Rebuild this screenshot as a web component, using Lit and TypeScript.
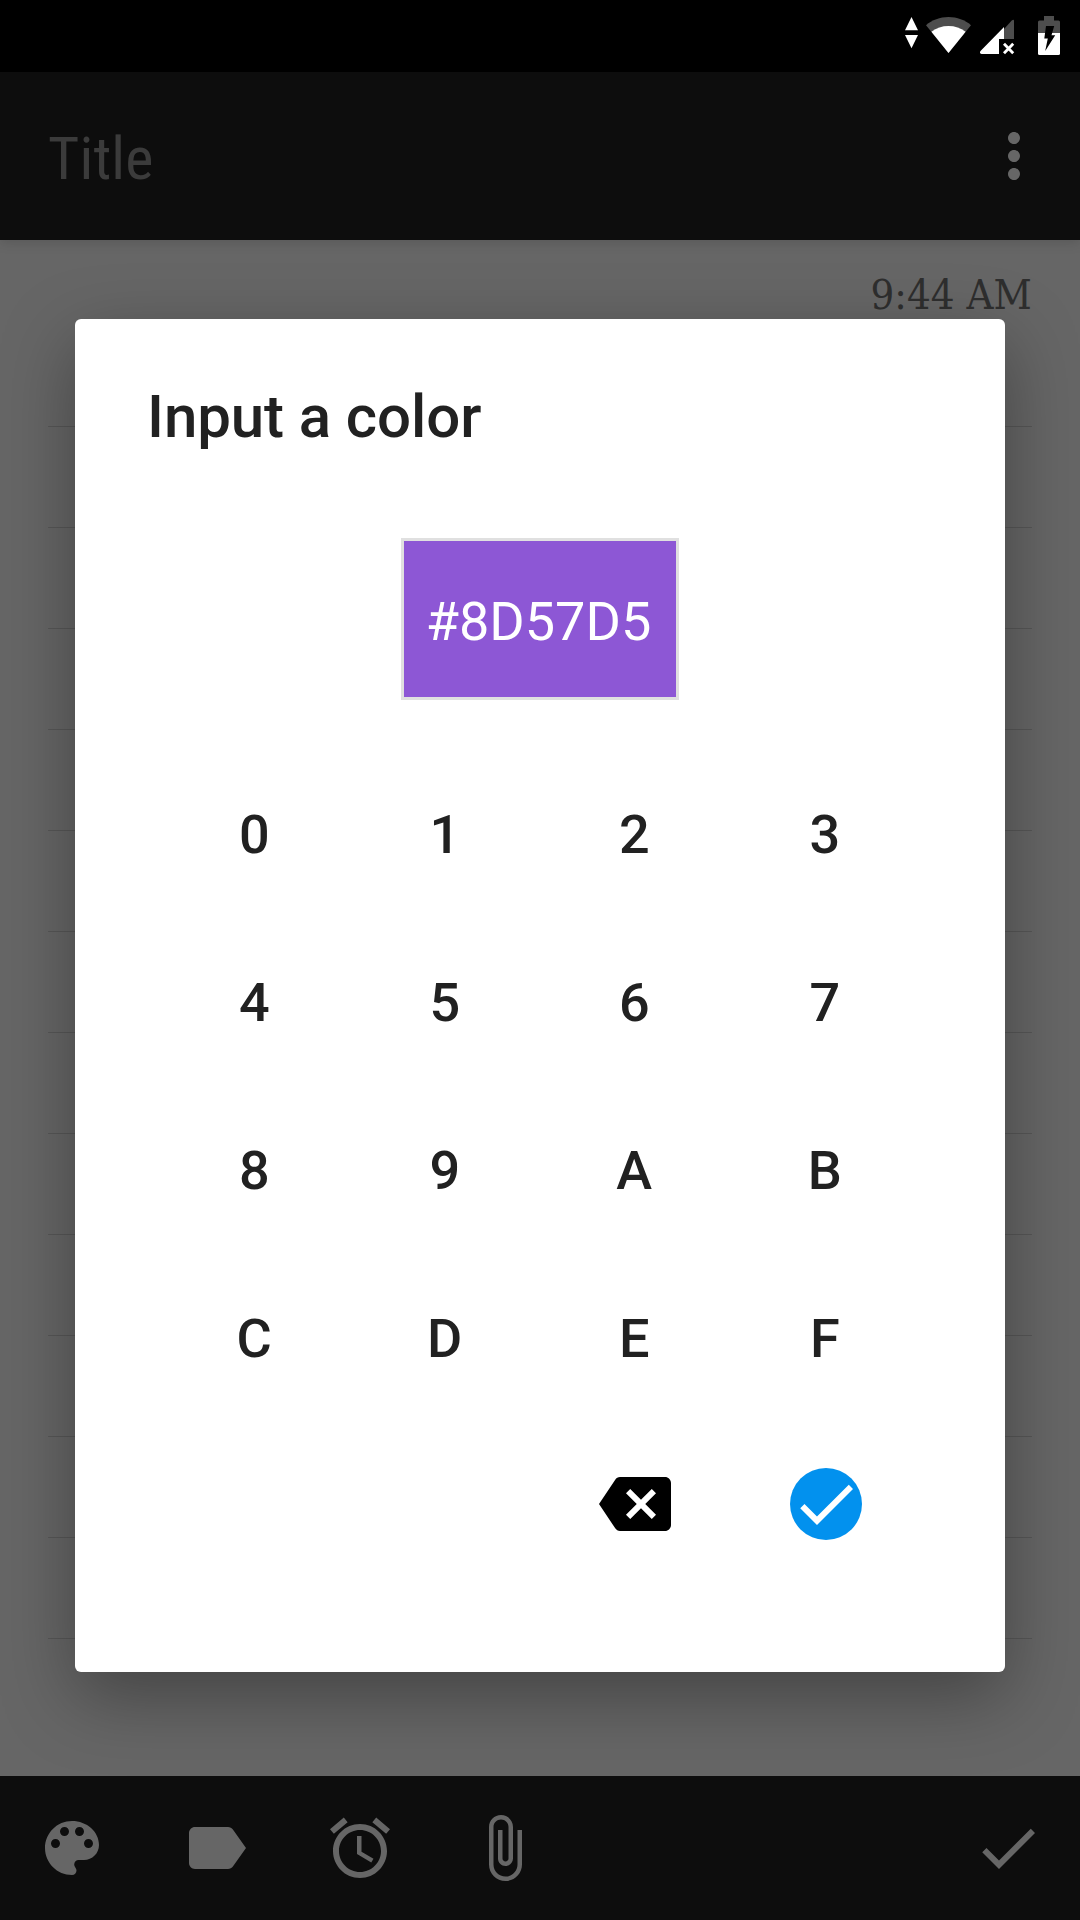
import { LitElement, html, css, svg } from "lit";
import { customElement, property, state } from "lit/decorators.js";

const ICONS: Record<string, string> = {
  more: "M12 8c1.1 0 2-.9 2-2s-.9-2-2-2-2 .9-2 2 .9 2 2 2zm0 2c-1.1 0-2 .9-2 2s.9 2 2 2 2-.9 2-2-.9-2-2-2zm0 6c-1.1 0-2 .9-2 2s.9 2 2 2 2-.9 2-2-.9-2-2-2z",
  palette:
    "M12 3c-4.97 0-9 4.03-9 9s4.03 9 9 9c.83 0 1.5-.67 1.5-1.5 0-.39-.15-.74-.39-1.01-.23-.26-.38-.61-.38-.99 0-.83.67-1.5 1.5-1.5H16c2.76 0 5-2.24 5-5 0-4.42-4.03-8-9-8zm-5.5 9c-.83 0-1.5-.67-1.5-1.5S5.67 9 6.5 9 8 9.67 8 10.5 7.33 12 6.5 12zm3-4C8.67 8 8 7.33 8 6.5S8.67 5 9.5 5s1.5.67 1.5 1.5S10.33 8 9.5 8zm5 0c-.83 0-1.5-.67-1.5-1.5S13.67 5 14.5 5s1.5.67 1.5 1.5S15.33 8 14.5 8zm3 4c-.83 0-1.5-.67-1.5-1.5S16.67 9 17.5 9s1.5.67 1.5 1.5-.67 1.5-1.5 1.5z",
  label:
    "M17.63 5.84C17.27 5.33 16.67 5 16 5L5 5.01C3.9 5.01 3 5.9 3 7v10c0 1.1.9 1.99 2 1.99L16 19c.67 0 1.27-.33 1.63-.84L22 12l-4.37-6.16z",
  alarm:
    "M22 5.72l-4.6-3.86-1.29 1.53 4.6 3.86L22 5.72zM7.88 3.39L6.6 1.86 2 5.71l1.29 1.53 4.59-3.85zM12.5 8H11v6l4.75 2.85.75-1.23-4-2.37V8zM12 4c-4.97 0-9 4.03-9 9s4.02 9 9 9c4.97 0 9-4.03 9-9s-4.03-9-9-9zm0 16c-3.87 0-7-3.13-7-7s3.13-7 7-7 7 3.13 7 7-3.13 7-7 7z",
  attach:
    "M16.5 6v11.5c0 2.21-1.79 4-4 4s-4-1.79-4-4V5c0-1.38 1.12-2.5 2.5-2.5s2.5 1.12 2.5 2.5v10.5c0 .55-.45 1-1 1s-1-.45-1-1V6H10v9.5c0 1.38 1.12 2.5 2.5 2.5s2.5-1.12 2.5-2.5V5c0-2.21-1.79-4-4-4S7 2.79 7 5v12.5c0 3.04 2.46 5.5 5.5 5.5s5.5-2.46 5.5-5.5V6h-1.5z",
  check: "M9 16.17L4.83 12l-1.42 1.41L9 19 21 7l-1.41-1.41z",
  backspace:
    "M22 3H7c-.69 0-1.23.35-1.59.88L0 12l5.41 8.11c.36.53.9.89 1.59.89h15c1.1 0 2-.9 2-2V5c0-1.1-.9-2-2-2zm-3 12.59L17.59 17 14 13.41 10.41 17 9 15.59 12.59 12 9 8.41 10.41 7 14 10.59 17.59 7 19 8.41 15.41 12 19 15.59z",
};

@customElement("md-icon")
class MdIcon extends LitElement {
  @property() name = "";

  static styles = css`
    :host { display: block; width: 72px; height: 72px; flex: none; }
    .glyph { display: block; width: 72px; height: 72px; fill: currentColor; }
  `;

  render() {
    return html`<svg class="glyph" viewBox="0 0 24 24">
      ${svg`<path d=${ICONS[this.name] ?? ""}></path>`}
    </svg>`;
  }
}

@customElement("status-bar")
class StatusBar extends LitElement {
  static styles = css`
    :host { display: flex; justify-content: flex-end; height: 72px; background: #000; }
    .icons { display: block; width: 200px; height: 72px; }
    .dim { fill: #4d4d4d; }
    .lit { fill: #fff; }
    .cut { fill: #000; }
    .cross { stroke: #fff; stroke-width: 2.8; fill: none; }
  `;

  render() {
    return html`<svg class="icons" viewBox="0 0 200 72">
      <path class="lit" d="M31.500 17L38 30.300H25zM25 35h13l-6.500 13.300z" />
      <path class="dim" d="M68.500 53L46 25.200C52 20 60 17 68.500 17S85 20 91 25.200z" />
      <path class="lit" d="M68.500 53L51.400 31.800C56.500 28 62 26 68.500 26s12 2 17.100 5.800z" />
      <path class="dim" d="M134 21v18h-14V33.500L131.500 20.800Q134 18.500 134 21z" />
      <path class="lit" d="M124 27v12h-5v15h-17.500q-2.500-.7-1-3z" />
      <path class="cross" d="M124 43.700l9.200 9.600M133.200 43.700L124 53.300" />
      <path class="dim" d="M164 16h10v4.500h4.500q1.500 0 1.500 1.500v11h-22V22q0-1.500 1.500-1.500h4.500z" />
      <path class="lit" d="M158 33h22v20.500q0 1.500-1.500 1.500h-19q-1.500 0-1.500-1.500z" />
      <path class="cut" d="M166 26h8.200l-2.700 9.200h3.700L165.200 51l2.600-12.500h-3.500z" />
    </svg>`;
  }
}

@customElement("color-dialog")
class ColorDialog extends LitElement {
  @state() private color = "8D57D5";

  private keys = [..."0123456789ABCDEF"];

  static styles = css`
    :host {
      display: flex;
      flex-direction: column;
      box-sizing: border-box;
      width: 930px;
      height: 1353px;
      padding: 62px 74px 0;
      border-radius: 6px;
      background: #fff;
      box-shadow: 0 24px 72px rgba(0, 0, 0, 0.34);
      font-family: Roboto, sans-serif;
      color: #212121;
    }
    .heading {
      margin: 0 0 85px -2px;
      font-size: 60px;
      line-height: 72px;
      font-weight: 500;
      letter-spacing: -0.1px;
    }
    .swatch {
      align-self: center;
      display: flex;
      align-items: center;
      justify-content: center;
      box-sizing: border-box;
      width: 278px;
      height: 162px;
      padding: 5px 3px 0 0;
      border: 3px solid #e0e0e0;
      color: #fff;
      font-size: 54px;
      white-space: nowrap;
    }
    .pad {
      display: grid;
      grid-template-columns: repeat(4, 190.5px);
      grid-auto-rows: 168px;
      justify-content: center;
      margin-top: 48px;
    }
    .key {
      display: flex;
      align-items: center;
      justify-content: center;
      padding: 5px 0 0;
      border: 0;
      background: none;
      color: inherit;
      font: 500 54px/63px Roboto, sans-serif;
    }
    .key:nth-child(4n + 3),
    .key:nth-child(4n) { padding-right: 2px; }
    .key.erase { grid-column: 3; padding: 0; color: #000; }
    .key.accept { padding: 0; }
    .disc { border-radius: 50%; background: #0291ee; color: #fff; }
  `;

  private add(k: string) {
    if (this.color.length < 6) this.color += k;
  }

  render() {
    return html`
      <h2 class="heading">Input a color</h2>
      <div class="swatch" style="background:#${this.color.padEnd(6, "0")}">#${this.color}</div>
      <div class="pad">
        ${this.keys.map((k) => html`<button class="key" @click=${() => this.add(k)}>${k}</button>`)}
        <button class="key erase" @click=${() => (this.color = this.color.slice(0, -1))}>
          <md-icon name="backspace"></md-icon>
        </button>
        <button class="key accept"><md-icon class="disc" name="check"></md-icon></button>
      </div>
    `;
  }
}

@customElement("app-root")
class AppRoot extends LitElement {
  static styles = css`
    :host {
      display: flex;
      flex-direction: column;
      position: relative;
      width: 1080px;
      height: 1920px;
      overflow: hidden;
      background: #666;
      font-family: Roboto, sans-serif;
    }
    .toolbar {
      display: flex;
      align-items: center;
      justify-content: space-between;
      box-sizing: border-box;
      height: 168px;
      padding: 0 30px 0 48px;
      background: #0d0d0d;
      color: #666;
      box-shadow: 0 2px 12px rgba(0, 0, 0, 0.15);
    }
    .title {
      padding-top: 6px;
      font-family: "Roboto Condensed", Roboto, sans-serif;
      font-stretch: 75%;
      font-size: 60px;
      line-height: 72px;
      letter-spacing: 0.2px;
      color: #3b3b3b;
    }
    .note { flex: 1; display: flex; flex-direction: column; padding: 0 48px; }
    .time {
      align-self: flex-end;
      height: 84px;
      padding-top: 25px;
      font-family: "Roboto Slab", "DejaVu Serif", serif;
      font-size: 41px;
      line-height: 60px;
      color: #2e2e2e;
      transform: scaleX(0.912);
      transform-origin: 100% 50%;
      white-space: nowrap;
    }
    .rule { height: 1px; margin: 77px 0 23px; background: rgba(0, 0, 0, 0.14); }
    .actions {
      display: flex;
      align-items: center;
      gap: 72px;
      box-sizing: border-box;
      height: 144px;
      padding: 0 36px;
      background: #0d0d0d;
      color: #666;
    }
    .done { margin-left: auto; }
    .overlay { position: absolute; left: 75px; top: 319px; }
  `;

  render() {
    return html`
      <status-bar></status-bar>
      <header class="toolbar">
        <span class="title">Title</span>
        <md-icon name="more"></md-icon>
      </header>
      <main class="note">
        <div class="time">9:44 AM</div>
        ${Array.from({ length: 13 }, () => html`<div class="rule"></div>`)}
      </main>
      <footer class="actions">
        <md-icon name="palette"></md-icon>
        <md-icon name="label"></md-icon>
        <md-icon name="alarm"></md-icon>
        <md-icon name="attach"></md-icon>
        <md-icon class="done" name="check"></md-icon>
      </footer>
      <color-dialog class="overlay"></color-dialog>
    `;
  }
}
